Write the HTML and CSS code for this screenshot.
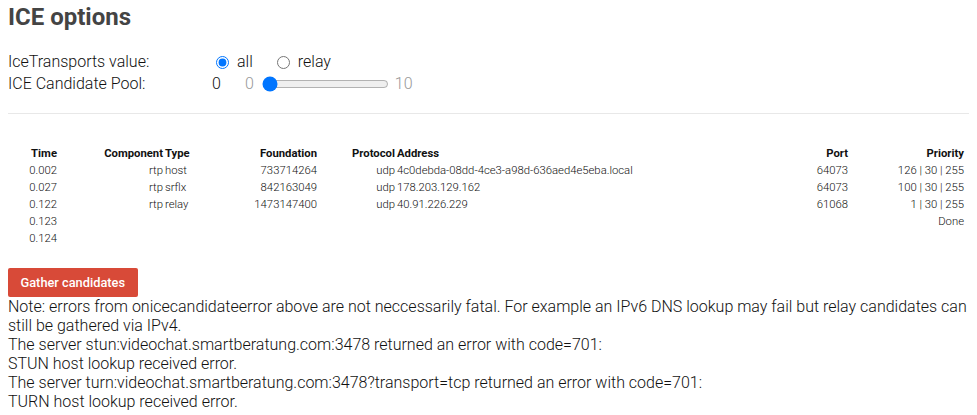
FILE: index.html
```html
<!DOCTYPE html>
<html>
<head>
<meta charset="utf-8">
<link rel="stylesheet" href="styles.css">
</head>
<body>
<section class="options">
  <h2 class="title">ICE options</h2>
  <div class="row">
    <span class="label transports-label">IceTransports value:</span>
    <input class="radio" type="radio" name="transports" id="all" checked>
    <label class="radio-label" for="all">all</label>
    <input class="radio radio-second" type="radio" name="transports" id="relay">
    <label class="radio-label" for="relay">relay</label>
  </div>
  <div class="row">
    <label class="label pool-label" for="pool">ICE Candidate Pool:</label>
    <span class="pool-value">0</span>
    <span class="gray min">0</span>
    <input class="range" type="range" id="pool" min="0" max="10" value="0">
    <span class="gray max">10</span>
  </div>
</section>

<table class="candidates">
  <colgroup>
    <col class="c-time"><col class="c-comp"><col class="c-type"><col class="c-found"><col class="c-proto"><col class="c-addr"><col class="c-port"><col class="c-prio">
  </colgroup>
  <thead>
    <tr>
      <th class="r">Time</th><th class="r">Component</th><th class="l">Type</th><th class="r">Foundation</th><th class="r">Protocol</th><th class="l">Address</th><th class="r">Port</th><th class="r">Priority</th>
    </tr>
  </thead>
  <tbody>
    <tr><td class="r">0.002</td><td class="r">rtp</td><td class="l">host</td><td class="r">733714264</td><td class="r">udp</td><td class="l">4c0debda-08dd-4ce3-a98d-636aed4e5eba.local</td><td class="r">64073</td><td class="r">126 | 30 | 255</td></tr>
    <tr><td class="r">0.027</td><td class="r">rtp</td><td class="l">srflx</td><td class="r">842163049</td><td class="r">udp</td><td class="l">178.203.129.162</td><td class="r">64073</td><td class="r">100 | 30 | 255</td></tr>
    <tr><td class="r">0.122</td><td class="r">rtp</td><td class="l">relay</td><td class="r">1473147400</td><td class="r">udp</td><td class="l">40.91.226.229</td><td class="r">61068</td><td class="r">1 | 30 | 255</td></tr>
    <tr><td class="r">0.123</td><td></td><td></td><td></td><td></td><td></td><td></td><td class="r">Done</td></tr>
    <tr><td class="r">0.124</td><td></td><td></td><td></td><td></td><td></td><td></td><td></td></tr>
  </tbody>
</table>

<button class="gather">Gather candidates</button>
<div class="messages">
  <div>Note: errors from onicecandidateerror above are not neccessarily fatal. For example an IPv6 DNS lookup may fail but relay candidates can still be gathered via IPv4.</div>
  <div>The server stun:videochat.smartberatung.com:3478 returned an error with code=701:</div>
  <div>STUN host lookup received error.</div>
  <div>The server turn:videochat.smartberatung.com:3478?transport=tcp returned an error with code=701:</div>
  <div>TURN host lookup received error.</div>
</div>
</body>
</html>
```

FILE: styles.css
```css
html, body {
  background: #fff;
}
body {
  margin: 0;
  padding: 3px 8px 0 8px;
  font-family: Roboto, "Liberation Sans", sans-serif;
  font-weight: 300;
  font-size: 16px;
  color: #111;
}
.options {
  padding-bottom: 18px;
  border-bottom: 1px solid #e8e8e8;
}
.title {
  margin: 0 0 20px 0;
  font-size: 24px;
  line-height: 28px;
  font-weight: 700;
  color: #444;
}
.row {
  display: flex;
  align-items: center;
  height: 22px;
  line-height: 22px;
}
.label {
  flex: none;
}
.transports-label {
  width: 208px;
}
.pool-label {
  width: 204px;
}
.radio {
  margin: 0;
  width: 13px;
  height: 13px;
  accent-color: #0075ff;
}
.radio-second {
  margin-left: 24px;
}
.radio-label {
  margin-left: 8px;
}
.gray {
  color: #999;
}
.min {
  margin-left: 24px;
}
.range {
  margin: 0 0 0 8px;
  width: 127px;
  accent-color: #0075ff;
}
.max {
  margin-left: 6px;
}
.candidates {
  margin-top: 31px;
  width: 957px;
  table-layout: fixed;
  border-collapse: collapse;
  font-size: 11.3px;
  line-height: 17px;
  color: #111;
}
.candidates th {
  font-weight: 700;
  padding: 0 1px;
  white-space: nowrap;
}
.candidates td {
  padding: 0 1px;
  white-space: nowrap;
}
.r { text-align: right; }
.l { text-align: left; }
.c-time { width: 50px; }
.c-comp { width: 106px; }
.c-type { width: 36px; }
.c-found { width: 118px; }
.c-proto { width: 78px; }
.c-addr { width: 404px; }
.c-port { width: 49px; }
.c-prio { width: 116px; }
.gather {
  display: block;
  margin: 21px 0 0 0;
  height: 29px;
  padding: 0 12.5px;
  border: none;
  border-radius: 2px;
  background: #d84a38;
  color: #fff;
  font-family: Roboto, "Liberation Sans", sans-serif;
  font-weight: 500;
  font-size: 12.8px;
}
.messages {
  line-height: 19px;
}
```
